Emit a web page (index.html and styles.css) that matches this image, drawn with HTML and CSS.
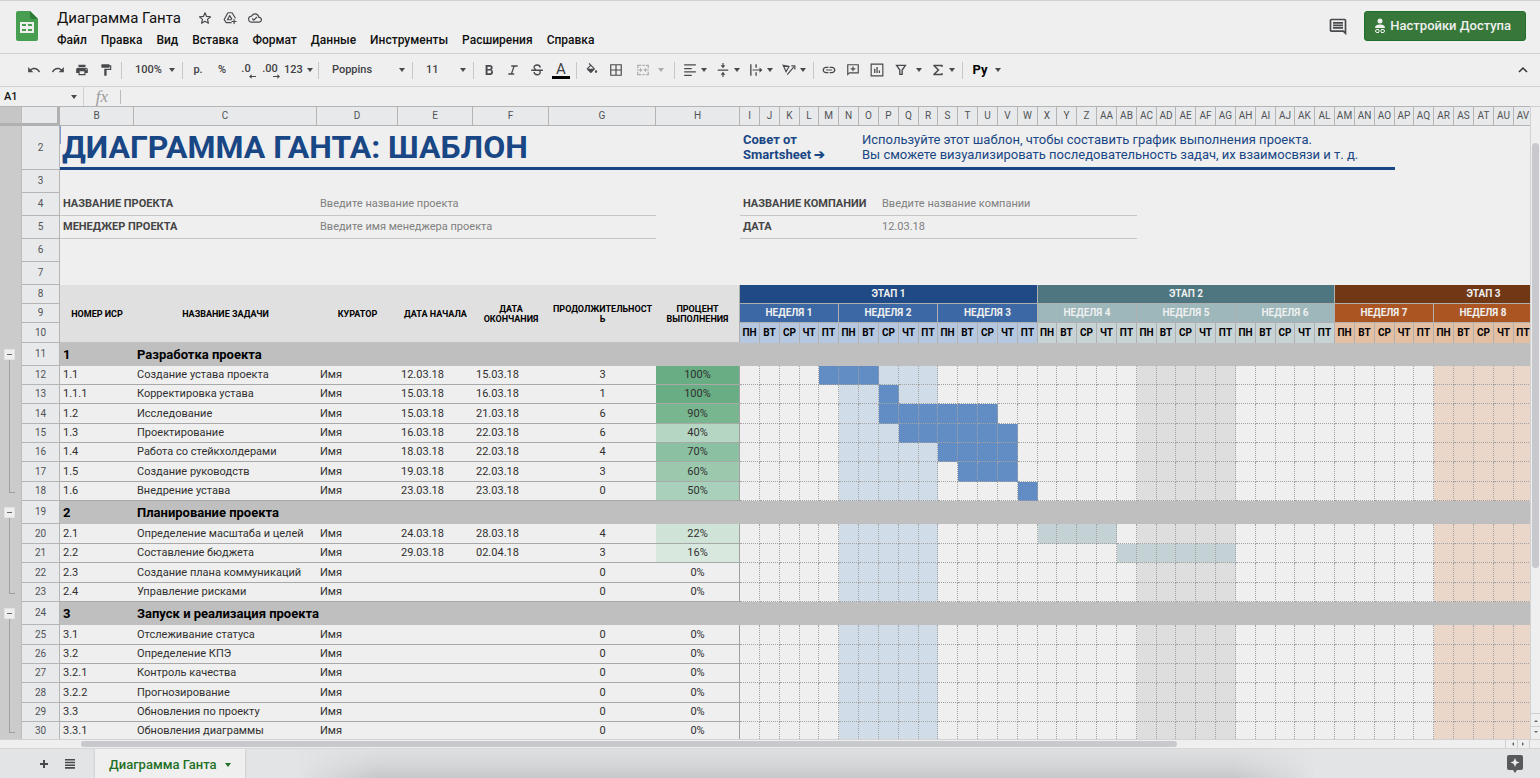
FILE: index.html
```html
<!DOCTYPE html>
<html lang="ru">
<head>
<meta charset="utf-8">
<title>Диаграмма Ганта</title>
<link rel="stylesheet" href="styles.css">
</head>
<body>
<div class="app">
  <header class="header">
    <svg class="logo" viewBox="0 0 22 30" aria-hidden="true"><path d="M2 0h12l8 8v20a2 2 0 0 1-2 2H2a2 2 0 0 1-2-2V2a2 2 0 0 1 2-2z" fill="#479d50"/><path d="M14 0l8 8h-6a2 2 0 0 1-2-2z" fill="#2c7a3a"/><path fill="#efefef" fill-rule="evenodd" d="M4 11h14v11H4zM6 13v2h4v-2zM12 13v2h4v-2zM6 18v2h4v-2zM12 18v2h4v-2z"/></svg>
    <div class="doc">
      <div class="doc-line">
        <h1 class="doc-title">Диаграмма Ганта</h1>
        <button class="icon-btn" aria-label="Пометить"><svg viewBox="0 0 24 24"><path fill="none" stroke="currentColor" stroke-width="2" stroke-linejoin="round" d="M12 3l2.700 6.300 6.800.6-5.200 4.500 1.600 6.600L12 17.500 6.100 21l1.600-6.600L2.500 9.900l6.800-.6z"/></svg></button>
        <button class="icon-btn" aria-label="Переместить"><svg viewBox="0 0 24 24"><path fill="none" stroke="currentColor" stroke-width="2" stroke-linejoin="round" stroke-linecap="round" d="M21 12L15.500 3h-7L2 14.500 5.500 20H14M11.500 8l-4 7H14M11.500 8l3.500 5.500M19 14.500v7M15.500 18h7"/></svg></button>
        <button class="icon-btn" aria-label="Сохранено"><svg viewBox="0 0 24 24"><path fill="currentColor" d="M19.350 10.040A7.490 7.490 0 0 0 12 4C9.110 4 6.600 5.640 5.350 8.040A5.994 5.994 0 0 0 0 14c0 3.310 2.690 6 6 6h13c2.760 0 5-2.240 5-5 0-2.640-2.050-4.780-4.650-4.960zM19 18H6c-2.210 0-4-1.790-4-4 0-2.050 1.530-3.760 3.560-3.970l1.070-.11.5-.95A5.469 5.469 0 0 1 12 6c2.620 0 4.880 1.860 5.390 4.430l.3 1.500 1.530.11A2.980 2.980 0 0 1 22 15c0 1.650-1.350 3-3 3zm-9-3.820l-2.090-2.090L6.500 13.500 10 17l6.010-6.010-1.410-1.410z"/></svg></button>
      </div>
      <nav class="menu">
        <button>Файл</button><button>Правка</button><button>Вид</button><button>Вставка</button><button>Формат</button><button>Данные</button><button>Инструменты</button><button>Расширения</button><button>Справка</button>
      </nav>
    </div>
    <button class="comments" aria-label="Комментарии"><svg viewBox="0 0 24 24"><path fill="currentColor" d="M22 4c0-1.100-.9-2-2-2H4c-1.100 0-2 .9-2 2v12c0 1.100.9 2 2 2h14l4 4zM20 4v13.200L18.800 16H4V4zM6 12h12v2H6zm0-3h12v2H6zm0-3h12v2H6z"/></svg></button>
    <button class="share"><svg viewBox="0 0 12 16" aria-hidden="true"><circle cx="6" cy="3" r="2.500" fill="currentColor"/><path fill="currentColor" d="M1 10c0-3 3-3.500 5-3.500S11 7 11 10z"/><path fill="none" stroke="currentColor" d="M5 11.500H3a1.500 1.500 0 0 0 0 3h2M7 11.500h2a1.500 1.500 0 0 1 0 3H7M4 13h4"/></svg>Настройки Доступа</button>
  </header>

  <div class="toolbar">
    <button class="tool" aria-label="Отменить"><svg viewBox="0 0 24 24"><path d="M12.500 8c-2.650 0-5.050.99-6.900 2.600L2 7v9h9l-3.620-3.620c1.390-1.160 3.160-1.880 5.120-1.880 3.540 0 6.550 2.310 7.600 5.500l2.370-.78C21.080 11.030 17.150 8 12.500 8z"/></svg></button>
    <button class="tool" aria-label="Повторить"><svg viewBox="0 0 24 24"><path d="M18.400 10.600C16.550 8.990 14.150 8 11.500 8c-4.650 0-8.580 3.030-9.960 7.220L3.900 16c1.050-3.190 4.050-5.500 7.600-5.500 1.950 0 3.730.72 5.120 1.880L13 16h9V7z"/></svg></button>
    <button class="tool" aria-label="Печать"><svg viewBox="0 0 24 24"><path d="M19 8H5c-1.660 0-3 1.340-3 3v6h4v4h12v-4h4v-6c0-1.660-1.340-3-3-3zm-3 11H8v-5h8v5zm3-7c-.55 0-1-.45-1-1s.45-1 1-1 1 .45 1 1-.45 1-1 1zm-1-9H6v4h12V3z"/></svg></button>
    <button class="tool" aria-label="Копировать формат"><svg viewBox="0 0 24 24"><path d="M18 4V3c0-.55-.45-1-1-1H5c-.55 0-1 .45-1 1v4c0 .55.45 1 1 1h12c.55 0 1-.45 1-1V6h1v4H9v11c0 .55.45 1 1 1h2c.55 0 1-.45 1-1v-9h8V4z"/></svg></button>
    <span class="sep"></span>
    <span class="pick pick-s"><select aria-label="Масштаб"><option>100%</option></select></span>
    <span class="sep"></span>
    <button class="tool">р.</button>
    <button class="tool">%</button>
    <button class="tool decimal" aria-label="Меньше знаков">.0<svg viewBox="0 0 8 5"><path d="M8 2H3V0L0 2.500 3 5V3h5z"/></svg></button>
    <button class="tool decimal" aria-label="Больше знаков">.00<svg viewBox="0 0 8 5"><path d="M0 2h5V0l3 2.500L5 5V3H0z"/></svg></button>
    <button class="tool caret">123</button>
    <span class="sep"></span>
    <span class="pick pick-l"><select aria-label="Шрифт"><option>Poppins</option></select></span>
    <span class="sep"></span>
    <span class="pick pick-s"><select aria-label="Размер"><option>11</option></select></span>
    <span class="sep"></span>
    <button class="tool" aria-label="Полужирный"><svg viewBox="0 0 24 24"><path d="M16.300 11.500c1.200-.8 2-2 2-3.500 0-2.600-2-4.500-4.600-4.500H6.200v17h8.300c2.500 0 4.400-2 4.400-4.600 0-2-1-3.600-2.600-4.400zM9.500 6.400h4c1 0 1.700.8 1.700 1.800s-.8 1.900-1.800 1.900H9.500zM14 17.500H9.500V13H14c1.200 0 2 1 2 2.200s-.9 2.300-2 2.300z"/></svg></button>
    <button class="tool" aria-label="Курсив"><svg viewBox="0 0 24 24"><path d="M9 4v2.500h3.400l-3.900 11H4V20h10v-2.500h-3.200l3.900-11H20V4z"/></svg></button>
    <button class="tool" aria-label="Зачёркнутый"><svg viewBox="0 0 24 24"><path fill="none" stroke="#47494c" stroke-width="2.300" d="M17.500 8C17 1.500 6.500 2.500 7 8c.2 1.500 1.500 2.500 3 3.500M2 12.500h20M7 15.500c.5 6.500 11 6 10.500 0-.1-1-.5-2-1.500-3"/></svg></button>
    <button class="tool text-color" aria-label="Цвет текста">A</button>
    <span class="sep"></span>
    <button class="tool" aria-label="Заливка"><svg viewBox="0 0 24 24"><path d="M16.560 8.940L7.620 0 6.210 1.410l2.380 2.380-5.150 5.150c-.59.59-.59 1.540 0 2.120l5.500 5.500c.58.58 1.540.58 2.120 0l5.500-5.500c.59-.58.59-1.530 0-2.120zM5.210 10L10 5.210 14.790 10zM19 11.500s-2 2.170-2 3.500a2 2 0 0 0 4 0c0-1.330-2-3.500-2-3.500z"/></svg></button>
    <button class="tool" aria-label="Границы"><svg viewBox="0 0 24 24"><path d="M2 2v20h20V2zm9 18H4v-7h7zm0-9H4V4h7zm9 9h-7v-7h7zm0-9h-7V4h7z"/></svg></button>
    <button class="tool caret off" aria-label="Объединить"><svg viewBox="0 0 24 24"><path d="M2 3h7v2H4v4H2zM11 3h4v2h-4zM17 3h5v6h-2V5h-3zM2 15h2v4h5v2H2zM11 19h4v2h-4zM20 15h2v6h-5v-2h3zM2 11h5V8l4 4-4 4v-3H2zM22 11h-5V8l-4 4 4 4v-3h5z"/></svg></button>
    <span class="sep"></span>
    <button class="tool caret" aria-label="По горизонтали"><svg viewBox="0 0 24 24"><path d="M2 2h20v2.400H2zM2 8.500h13v2.400H2zM2 14h20v2.400H2zM2 20h13v2.400H2z"/></svg></button>
    <button class="tool caret" aria-label="По вертикали"><svg viewBox="0 0 24 24"><path d="M3 11h18v2.300H3zM11 0h2v4h3l-4 5-4-5h3zM11 24h2v-4h3l-4-5-4 5h3z"/></svg></button>
    <button class="tool caret" aria-label="Перенос"><svg viewBox="0 0 24 24"><path d="M2 2h2.300v20H2zM11 2h2.300v6H11zM11 16h2.300v6H11zM6 11h12V7.500l5 4.500-5 4.500V13H6z"/></svg></button>
    <button class="tool caret" aria-label="Поворот"><svg viewBox="0 0 24 24"><path fill="none" stroke="#47494c" stroke-width="2" d="M2 4l5 11 5-9zM3 6h10M9 20L20 7M22 11V5h-6"/></svg></button>
    <span class="sep"></span>
    <button class="tool" aria-label="Ссылка"><svg viewBox="0 0 24 24"><path d="M3.400 12c0-1.900 1.600-3.300 3.600-3.300h4V6.500H7c-3.200 0-6 2.400-6 5.500s2.800 5.500 6 5.500h4v-2.200H7c-2 0-3.600-1.400-3.600-3.300zM7 13h10v-2H7zm10-6.500h-4v2.200h4c2 0 3.600 1.400 3.600 3.300s-1.600 3.300-3.600 3.300h-4v2.200h4c3.200 0 6-2.400 6-5.500s-2.800-5.500-6-5.500z"/></svg></button>
    <button class="tool" aria-label="Комментарий"><svg viewBox="0 0 24 24"><path d="M22 2H2v20l4-4h16zM4 4h16v12H5.500L4 17.500zM11 6h2v3h3v2h-3v3h-2v-3H8V9h3z"/></svg></button>
    <button class="tool" aria-label="Диаграмма"><svg viewBox="0 0 24 24"><path d="M1 1v22h22V1zm20 20H3V3h18zM7 10h2.200v7H7zM11 7h2.200v10H11zM15 13h2.200v4H15z"/></svg></button>
    <button class="tool caret caret-far" aria-label="Фильтр"><svg viewBox="0 0 24 24"><path fill="none" stroke="#47494c" stroke-width="2.300" d="M4.500 4h15L14 12v7.500h-4V12z"/></svg></button>
    <button class="tool caret" aria-label="Функции"><svg viewBox="0 0 24 24"><path d="M20 7V3H4v2.300L11 12l-7 6.700V21h16v-4h-2.300v1.500H8l6.500-6.500L8 5.500h9.700V7z"/></svg></button>
    <span class="sep"></span>
    <button class="tool caret caret-far lang">Pу</button>
    <button class="tool collapse" aria-label="Свернуть"><svg viewBox="0 0 24 24"><path fill="none" stroke="#333" stroke-width="3" d="M4 16l8-8 8 8"/></svg></button>
  </div>

  <div class="formula">
    <span class="pick pick-name"><select aria-label="Ячейка"><option>A1</option></select></span>
    <label class="fx" for="formula">fx</label>
    <input id="formula" type="text">
  </div>

  <main class="sheet">
    <div class="view"><table class="grid" id="grid"></table></div>
    <div class="vbar"><i class="vthumb"></i><button aria-label="Вверх" class="up"></button><button aria-label="Вниз" class="down"></button></div>
  </main>
  <div class="hbar"><div class="htrack"><i class="hthumb"></i></div><button aria-label="Влево" class="left"></button><button aria-label="Вправо" class="right"></button><span class="hcorner"></span></div>

  <footer class="tabs">
    <button class="tabs-btn" aria-label="Добавить лист"><svg viewBox="0 0 10 10"><path d="M4 1h2v3h3v2H6v3H4V6H1V4h3z"/></svg></button>
    <button class="tabs-btn" aria-label="Все листы"><svg viewBox="0 0 10 10"><path d="M0 0h10v1.600H0zM0 2.700h10v1.600H0zM0 5.400h10V7H0zM0 8.100h10v1.600H0z"/></svg></button>
    <button class="tab">Диаграмма Ганта</button>
    <div class="dock"></div>
    <button class="explore" aria-label="Анализ данных"><svg viewBox="0 0 16 18"><path fill="#58595b" d="M2 0h12a2 2 0 0 1 2 2v11a2 2 0 0 1-2 2h-4l-2 3-2-3H2a2 2 0 0 1-2-2V2a2 2 0 0 1 2-2z"/><path fill="#efefef" d="M8 3l1.300 3.200L12.500 7.500 9.300 8.800 8 12 6.700 8.800 3.500 7.500l3.200-1.300z"/></svg></button>
  </footer>
</div>
<script src="grid.js"></script>
</body>
</html>
```

FILE: styles.css
```css
* { box-sizing: border-box; }
body { margin: 0; background: #efefef; color: #222; font: 12px/14px Roboto, sans-serif; }
button, select, input { font: inherit; color: inherit; background: none; border: 0; padding: 0; margin: 0; border-radius: 0; outline: 0; }
svg { display: block; }

.app { display: flex; flex-direction: column; height: 100vh; overflow: hidden; border-top: 1px solid #d2d2d2; }

/* Header */
.header { display: flex; height: 53px; flex: none; border-bottom: 1px solid #d0d1d6; padding: 0 14px 0 16px; }
.logo { width: 22px; height: 30px; margin-top: 10px; flex: none; }
.doc { flex: 1; padding: 7px 0 0 19px; }
.doc-line { display: flex; align-items: center; gap: 11px; height: 20px; color: #47494c; }
.doc-title { margin: 0 6px 0 0; font: 400 15px/20px Roboto, sans-serif; color: #111; }
.icon-btn svg { width: 14px; height: 14px; }
.menu { display: flex; gap: 14px; margin-top: 4px; }
.menu button { font-size: 12px; line-height: 16px; font-weight: 500; color: #111; }
.comments { width: 20px; align-self: center; margin-right: 16px; color: #47494c; }
.comments svg { width: 20px; height: 20px; }
.share { display: flex; align-items: center; gap: 4px; height: 30px; padding: 0 14px 0 9px; margin-top: 10px; background: #37783a; border: 1px solid #21702a; border-radius: 3px; color: #efefef; font-size: 13px; font-weight: 500; }
.share svg { width: 12px; height: 16px; }

/* Toolbar */
.toolbar { display: flex; align-items: center; height: 33px; flex: none; padding: 0 5px 0 22px; border-bottom: 1px solid #d0d1d6; font-size: 11px; font-weight: 500; color: #3f4144; }
.tool { width: 24px; height: 24px; flex: none; display: flex; align-items: center; justify-content: center; }
.tool svg { width: 14px; height: 14px; fill: #47494c; flex: none; }
.sep { width: 1px; height: 17px; background: #c6c7ca; margin: 0 3px; flex: none; }
.caret { width: 33px; gap: 4px; }
.caret::after, .pick::after, .tab::after { content: ""; border: 3px solid transparent; border-top: 4px solid #47494c; border-bottom: 0; flex: none; }
.caret-far { width: 37px; gap: 8px; }
.off { opacity: .4; gap: 8px; width: 43px; }
.decimal { flex-direction: column; align-items: center; font-size: 11px; line-height: 10px; padding-top: 3px; }
.tool.decimal svg { width: 7px; height: 5px; align-self: flex-end; margin-right: 2px; }
.text-color { flex-direction: column; font-size: 15px; line-height: 14px; font-weight: 400; }
.text-color::after { content: ""; width: 18px; height: 3px; background: #000; }
.lang { width: 42px; font-size: 13px; font-weight: 700; color: #000; }
.collapse { margin-left: auto; }
.tool.collapse svg { width: 12px; height: 12px; }
.pick { display: flex; align-items: center; flex: none; padding-right: 4px; }
.pick select { appearance: none; flex: 1; min-width: 0; padding-left: 10px; }
.pick-s { width: 54px; }
.pick-l { width: 87px; }

/* Formula row */
.formula { display: flex; align-items: center; height: 19px; flex: none; }
.pick-name { width: 84px; height: 19px; border-right: 1px solid #cfcfcf; padding-right: 6px; font-size: 11px; font-weight: 500; color: #111; }
.pick-name select { padding-left: 4px; }
.fx { width: 36px; text-align: center; font: italic 17px/14px "Liberation Serif", serif; color: #9c9c9c; }
.formula input { flex: 1; height: 14px; border-left: 1px solid #bbb; padding-left: 6px; }

/* Grid */
.sheet { display: flex; flex: 1; min-height: 0; }
.view { flex: 1; min-width: 0; overflow: hidden; border-top: 1px solid #b5b5b5; }
.grid { table-layout: fixed; border-collapse: separate; border-spacing: 0; width: 100px; }
.grid td, .grid th { padding: 0; overflow: hidden; white-space: nowrap; text-align: left; font-weight: 400; line-height: 14px; }
.c-gut { width: 22px; } .c-no { width: 38px; } .c-b { width: 74px; } .c-c { width: 183px; } .c-d { width: 81px; }
.c-e { width: 75px; } .c-f { width: 76px; } .c-g { width: 107px; } .c-h { width: 84px; }
.c-day { width: 20px; } .c-day-s { width: 19px; }
.h19 { height: 19px; } .h20 { height: 20px; } .h23 { height: 23px; } .h44 { height: 44px; }

.grid .gut { background: #cbcbcb; border-right: 1px solid #bcbcbc; vertical-align: top; }
.grid .no, .grid .col { background: #e8e9eb; color: #505356; font-size: 10px; text-align: center; border-right: 1px solid #b5b5b5; border-bottom: 1px solid #b5b5b5; }
.grid .corner { background: #e8e9eb; border-right: 3px solid #b0b0b0; border-bottom: 3px solid #b0b0b0; }
.grid .gut-top { background: #c6c6c6; border-bottom: 3px solid #b0b0b0; }

.fold { display: block; width: 11px; height: 11px; margin: 6px 0 0 4px; background: #efefef; border: 1px solid #e2e2e2; }
.fold::after { content: ""; display: block; width: 5px; height: 1px; margin: 4px 2px; background: #666; }
.grid .rail-start { background: linear-gradient(#a0a0a0, #a0a0a0) 9px 16px / 1px 100% no-repeat #cbcbcb; }
.grid .rail { background: linear-gradient(#a0a0a0, #a0a0a0) 9px 0 / 1px 100% no-repeat #cbcbcb; }
.grid .rail-end { background: linear-gradient(#a0a0a0, #a0a0a0) 9px 0 / 1px 10px no-repeat, linear-gradient(#a0a0a0, #a0a0a0) 9px 10px / 6px 1px no-repeat #cbcbcb; }

.grid .brand { border-bottom: 3px solid #194684; color: #194684; }
.grid .title { font-size: 32px; line-height: 38px; font-weight: 700; padding-left: 2px; background: linear-gradient(#7d9bd0, #7d9bd0) 0 0 / 1px 18px no-repeat; }
.grid .tip { font-size: 13px; line-height: 15px; padding-left: 3px; }
.grid .tip-b { font-weight: 700; }
.grid .field { border-bottom: 1px solid #c6c6c6; font-size: 11px; padding-left: 3px; color: #808080; }
.grid .field-b { font-weight: 700; color: #454545; }

.grid .head { background: #e0e0e0; color: #000; font-size: 9px; line-height: 10px; font-weight: 700; text-align: center; white-space: normal; padding: 0 3px; overflow-wrap: anywhere; border-bottom: 1px solid #c2c2c2; }
.grid .head-h { border-right: 1px solid #b0b0b0; }
.grid .stage, .grid .week, .grid .dow { text-align: center; font-weight: 700; border-right: 1px solid #b0b0b0; }
.grid .stage, .grid .week { color: #efefef; font-size: 10px; border-bottom: 1px solid #b0b0b0; }
.grid .dow { color: #000; font-size: 10px; }
.p1.stage { background: #1f4a86; } .p1.week { background: #3c69a6; } .p1.dow { background: #b6c8e0; }
.p2.stage { background: #4d7680; } .p2.week { background: #9db7bb; } .p2.dow { background: #c8d3d5; }
.p3.stage { background: #713815; } .p3.week { background: #ab5523; } .p3.dow { background: #e3bfa3; }

.grid .group { background: #bfbfbf; color: #000; font-size: 13px; font-weight: 700; padding-left: 3px; }
.grid .cell { font-size: 11px; color: #303030; padding-left: 3px; border-bottom: 1px solid #a9a9a9; }
.grid .mid { text-align: center; padding: 0; }
.grid .pct { border-right: 1px solid #a0a0a0; }
.grid .day { border-right: 1px dotted #a2a2a2; border-bottom: 1px dotted #a2a2a2; }
.day.w2 { background: #d1dce9; } .day.w5 { background: #dedede; } .day.w8 { background: #ead7ca; }
.day.bar1 { background: #618dc4; } .day.bar2 { background: #c5d2d5; }
.g100 { background: #68ad83; } .g90 { background: #77b68f; } .g70 { background: #8cc0a2; } .g60 { background: #9cc9ae; }
.g50 { background: #a9d0ba; } .g40 { background: #b6d6c4; } .g22 { background: #cfe4d7; } .g16 { background: #d8e8de; }

/* Scrollbars */
.vbar { width: 10px; flex: none; display: flex; flex-direction: column; border-left: 1px solid #d2d2d2; border-top: 1px solid #d2d2d2; }
.vthumb { width: 7px; margin: 36px auto 0; flex: 0 1 425px; border-radius: 4px; background: #c7c9cd; }
.up { margin-top: auto; }
.up, .down { height: 13px; flex: none; border-top: 1px solid #cfcfcf; }
.up::after, .down::after, .left::after, .right::after { content: ""; display: block; margin: auto; width: 0; border: 2px solid transparent; }
.up::after { border-bottom-color: #666; } .down::after { border-top-color: #666; }
.left::after { border-right-color: #666; } .right::after { border-left-color: #666; }
.hbar { display: flex; height: 10px; flex: none; border-top: 1px solid #d2d2d2; border-bottom: 1px solid #d6d6d6; }
.htrack { flex: 1; padding: 1px 0 0 81px; }
.hthumb { display: block; width: 77%; height: 6px; border-radius: 3px; background: #c7c9cd; }
.left, .right { width: 12px; border-left: 1px solid #cfcfcf; }
.hcorner { width: 11px; border-left: 1px solid #cfcfcf; }

/* Sheet tabs */
.tabs { display: flex; height: 29px; flex: none; align-items: center; background: #e3e4e6; padding: 0 17px 0 31px; overflow: hidden; }
.tabs-btn { width: 26px; display: flex; justify-content: center; }
.tabs-btn svg { width: 10px; height: 10px; fill: #47494c; }
.tab { display: flex; align-items: center; gap: 8px; height: 29px; padding: 2px 14px 0 14px; margin-left: 12px; background: #efefef; color: #1f7026; font-size: 13px; font-weight: 500; box-shadow: 0 0 2px #b5b5b5; position: relative; }
.tab::after { border-top-color: #1f7026; }
.dock { flex: 1; align-self: stretch; margin: 0 190px 0 50px; background: linear-gradient(to right, #e3e4e6, transparent 8%, transparent 92%, #e3e4e6), linear-gradient(#dedfe1, #d6d7d8 50%, #c7c8c9); }
.explore svg { width: 16px; height: 18px; }
```

FILE: grid.js
```js
const DAYS = 45;
const LABELLED = 40;
const NAMES = ['ПН', 'ВТ', 'СР', 'ЧТ', 'ПТ'];
const HEADS = ['НОМЕР ИСР', 'НАЗВАНИЕ ЗАДАЧИ', 'КУРАТОР', 'ДАТА НАЧАЛА', 'ДАТА ОКОНЧАНИЯ', 'ПРОДОЛЖИТЕЛЬНОСТЬ', 'ПРОЦЕНТ ВЫПОЛНЕНИЯ'];

// [height, number, name, start, end, duration, percent, first bar day, last bar day, bar class]
const ROWS = [
  [23, '1', 'Разработка проекта'],
  [19, '1.1', 'Создание устава проекта', '12.03.18', '15.03.18', 3, 100, 4, 6, 'bar1'],
  [19, '1.1.1', 'Корректировка устава', '15.03.18', '16.03.18', 1, 100, 7, 7, 'bar1'],
  [20, '1.2', 'Исследование', '15.03.18', '21.03.18', 6, 90, 7, 12, 'bar1'],
  [19, '1.3', 'Проектирование', '16.03.18', '22.03.18', 6, 40, 8, 13, 'bar1'],
  [19, '1.4', 'Работа со стейкхолдерами', '18.03.18', '22.03.18', 4, 70, 10, 13, 'bar1'],
  [20, '1.5', 'Создание руководств', '19.03.18', '22.03.18', 3, 60, 11, 13, 'bar1'],
  [19, '1.6', 'Внедрение устава', '23.03.18', '23.03.18', 0, 50, 14, 14, 'bar1'],
  [23, '2', 'Планирование проекта'],
  [20, '2.1', 'Определение масштаба и целей', '24.03.18', '28.03.18', 4, 22, 15, 18, 'bar2'],
  [19, '2.2', 'Составление бюджета', '29.03.18', '02.04.18', 3, 16, 19, 24, 'bar2'],
  [20, '2.3', 'Создание плана коммуникаций', '', '', 0, 0],
  [19, '2.4', 'Управление рисками', '', '', 0, 0],
  [23, '3', 'Запуск и реализация проекта'],
  [20, '3.1', 'Отслеживание статуса', '', '', 0, 0],
  [19, '3.2', 'Определение КПЭ', '', '', 0, 0],
  [19, '3.2.1', 'Контроль качества', '', '', 0, 0],
  [20, '3.2.2', 'Прогнозирование', '', '', 0, 0],
  [19, '3.3', 'Обновления по проекту', '', '', 0, 0],
  [19, '3.3.1', 'Обновления диаграммы', '', '', 0, 0]
];

const td = (cls, text = '', span = 1, rows = 1) =>
  `<td class="${cls}" colspan="${span}" rowspan="${rows}">${text}</td>`;
const row = (height, no, cells, rail = '', gutter = '') =>
  `<tr class="h${height}"><td class="gut ${rail}">${gutter}</td><th class="no">${no}</th>${cells}</tr>`;
const letter = i => (i > 25 ? 'A' : '') + String.fromCharCode(65 + i % 26);
const range = n => [...Array(n).keys()];
const phase = day => 'p' + (Math.floor(day / 15) + 1);

let html = '<colgroup>' + ['gut', 'no', 'b', 'c', 'd', 'e', 'f', 'g', 'h'].map(c => `<col class="c-${c}">`).join('') +
  range(DAYS).map(d => `<col class="c-day${d % 6 === 3 ? '-s' : ''}">`).join('') + '</colgroup>';

html += '<tr class="h19"><td class="gut gut-top"></td><td class="corner"></td>' +
  range(7 + DAYS).map(i => `<th class="col">${i < 7 + LABELLED ? letter(i + 1) : ''}</th>`).join('') + '</tr>';
html += row(44, 2, td('brand title', 'ДИАГРАММА ГАНТА: ШАБЛОН', 7) +
  td('brand tip tip-b', 'Совет от<br>Smartsheet ➔', 6) +
  td('brand tip', 'Используйте этот шаблон, чтобы составить график выполнения проекта.<br>Вы сможете визуализировать последовательность задач, их взаимосвязи и т. д.', 27) +
  td('', '', 12));
html += row(23, 3, td('', '', 52));
[[4, 'НАЗВАНИЕ ПРОЕКТА', 'Введите название проекта', 'НАЗВАНИЕ КОМПАНИИ', 'Введите название компании'],
 [5, 'МЕНЕДЖЕР ПРОЕКТА', 'Введите имя менеджера проекта', 'ДАТА', '12.03.18']].forEach(([no, a, b, c, d]) => {
  html += row(23, no, td('field field-b', a, 2) + td('field', b, 4) + td('') +
    td('field field-b', c, 7) + td('field', d, 13) + td('', '', 25));
});
html += row(23, 6, td('', '', 52)) + row(23, 7, td('', '', 52));
html += row(19, 8, HEADS.map((h, i) => td('head' + (i === 6 ? ' head-h' : ''), h, 1, 3)).join('') +
  range(3).map(i => td(`stage p${i + 1}`, `ЭТАП ${i + 1}`, 15)).join(''));
html += row(19, 9, range(9).map(i => td(`week ${phase(i * 5)}`, i * 5 < LABELLED ? `НЕДЕЛЯ ${i + 1}` : '', 5)).join(''));
html += row(20, 10, range(DAYS).map(d => td(`dow ${phase(d)}`, d < LABELLED ? NAMES[d % 5] : '')).join(''));

ROWS.forEach((r, i) => {
  const [height, num, name, start, end, dur, pct, from, to, bar] = r;
  if (r.length === 3) {
    html += row(height, i + 11, td('group', num) + td('group', name, 51), 'rail-start',
      '<button class="fold" aria-label="Свернуть группу"></button>');
    return;
  }
  const last = !ROWS[i + 1] || ROWS[i + 1].length === 3;
  const days = range(DAYS).map(d => {
    const week = Math.floor(d / 5) + 1;
    return td('day' + (d >= from && d <= to ? ' ' + bar : week % 3 === 2 ? ' w' + week : ''));
  }).join('');
  html += row(height, i + 11, td('cell', num) + td('cell', name) + td('cell', 'Имя') + td('cell', start) +
    td('cell', end) + td('cell mid', dur) + td(`cell mid pct g${pct}`, pct + '%') + days,
    last ? 'rail-end' : 'rail');
});
document.getElementById('grid').innerHTML = html;
```
